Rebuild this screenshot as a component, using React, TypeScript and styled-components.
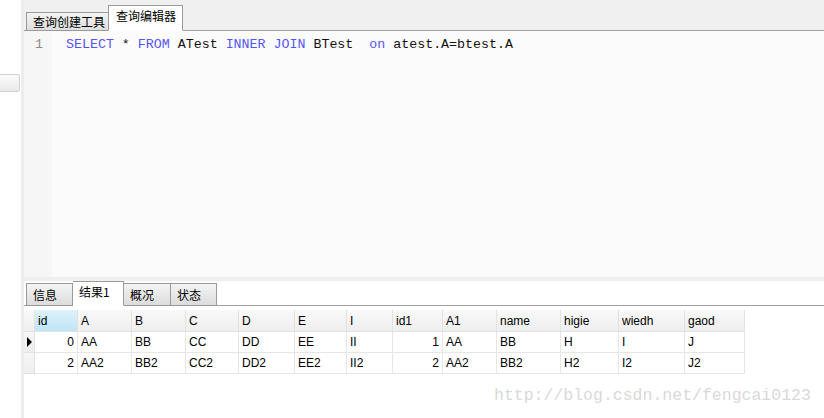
import React from 'react'
import styled, { createGlobalStyle, css } from 'styled-components'

const GlobalStyle = createGlobalStyle`
  html, body {
    margin: 0;
    padding: 0;
    background: #ffffff;
  }
  body {
    font-family: "Liberation Sans", "Noto Sans CJK SC", sans-serif;
    font-size: 12px;
    color: #000;
  }
`

const Window = styled.div`
  position: relative;
  display: flex;
  width: 824px;
  height: 418px;
  overflow: hidden;
  background: #fff;
`
const LeftRail = styled.div`
  width: 21px;
  flex: none;
  background: #fff;
  padding-top: 74px;
  box-sizing: border-box;
`
const RailButton = styled.div`
  width: 20px;
  height: 18px;
  box-sizing: border-box;
  border: 1px solid #cfcfcf;
  border-left: none;
  border-radius: 0 3px 3px 0;
  background: linear-gradient(#fbfbfb, #e9e9e9);
`
const RailDivider = styled.div`
  width: 3px;
  flex: none;
  background: #ededed;
`
const Main = styled.div`
  flex: 1;
  display: flex;
  flex-direction: column;
  min-width: 0;
`
const TopTabBar = styled.div`
  height: 30px;
  flex: none;
  background: #f0f0f0;
  border-bottom: 1px solid #a0a0a0;
  display: flex;
  align-items: flex-end;
  padding-left: 2px;
`
const tabBase = css`
  box-sizing: border-box;
  display: flex;
  align-items: center;
  font-family: "Noto Sans CJK SC", "Liberation Sans", sans-serif;
  font-size: 12px;
  line-height: 1;
  color: #000;
  border: 1px solid #9a9a9a;
  white-space: nowrap;
`
const Tab = styled.div<{ $active?: boolean; $w: number }>`
  ${tabBase};
  width: ${p => p.$w}px;
  margin-bottom: -1px;
  padding-left: 6px;
  ${p => p.$active
    ? css`
      height: 26px;
      background: #fff;
      border-bottom: 1px solid #fff;
      padding-left: 7px;
      padding-bottom: 5px;
    `
    : css`
      height: 19px;
      background: linear-gradient(#f3f3f3, #dedede);
      border-right: none;
      padding-top: 1px;
    `}
`
const Editor = styled.div`
  height: 246px;
  flex: none;
  display: flex;
  background: #fbfbfb;
`
const Gutter = styled.div`
  width: 28px;
  flex: none;
  background: #f6f6f6;
  box-sizing: border-box;
  padding: 6px 9px 0 0;
  text-align: right;
  font-family: "Liberation Mono", monospace;
  font-size: 13.3px;
  line-height: 16px;
  color: #8a8a8a;
`
const Code = styled.div`
  flex: 1;
  padding: 6px 0 0 14px;
  font-family: "Liberation Mono", monospace;
  font-size: 13.3px;
  line-height: 16px;
  color: #111;
  white-space: pre;
`
const Kw = styled.span`
  color: #5555f2;
`
const Splitter = styled.div`
  height: 4px;
  flex: none;
  background: #efefef;
`
const BottomTabBar = styled.div`
  height: 24px;
  flex: none;
  background: #fff;
  border-bottom: 1px solid #a0a0a0;
  display: flex;
  align-items: flex-end;
  padding-left: 2px;
`
const ResultTab = styled.div<{ $active?: boolean; $w: number }>`
  ${tabBase};
  width: ${p => p.$w}px;
  margin-bottom: -1px;
  padding-left: 6px;
  ${p => p.$active
    ? css`
      height: 25px;
      background: #fff;
      border-bottom: 1px solid #fff;
      padding-bottom: 3px;
    `
    : css`
      height: 23px;
      background: linear-gradient(#f4f4f4, #dcdcdc);
      padding-top: 1px;
    `}
  & + & {
    border-left: none;
  }
`
const GridArea = styled.div`
  flex: 1;
  padding-top: 4px;
  background: #fff;
`
const Grid = styled.div<{ $cols: string }>`
  display: grid;
  grid-template-columns: ${p => p.$cols};
  grid-auto-rows: 21px;
  grid-template-rows: 22px;
  width: max-content;
  font-family: "Liberation Sans", sans-serif;
  font-size: 12px;
`
const HeadCell = styled.div<{ $sel?: boolean }>`
  box-sizing: border-box;
  display: flex;
  align-items: center;
  padding: 0 3px;
  border-right: 1px solid #e2e2e2;
  border-bottom: 1px solid #e2e2e2;
  background: ${p => p.$sel
    ? 'linear-gradient(#def2fc, #bfe5f6)'
    : 'linear-gradient(#f9f9f9, #eeeeee)'};
`
const Cell = styled.div<{ $num?: boolean }>`
  box-sizing: border-box;
  display: flex;
  align-items: center;
  justify-content: ${p => (p.$num ? 'flex-end' : 'flex-start')};
  padding: 0 3px;
  border-right: 1px solid #e6e6e6;
  border-bottom: 1px solid #e6e6e6;
  background: #fff;
`
const RowHead = styled.div`
  box-sizing: border-box;
  display: flex;
  align-items: center;
  padding-left: 3px;
  border-right: 1px solid #e2e2e2;
  border-bottom: 1px solid #e2e2e2;
  background: linear-gradient(#f7f7f7, #ededed);
`
const Pointer = styled.span`
  width: 0;
  height: 0;
  border-top: 5px solid transparent;
  border-bottom: 5px solid transparent;
  border-left: 5px solid #000;
`
const Watermark = styled.div`
  position: absolute;
  left: 494px;
  top: 386px;
  font-family: "Liberation Mono", monospace;
  font-size: 16.5px;
  line-height: 20px;
  color: #d9d9d9;
  white-space: nowrap;
`

const columns = [
  { name: 'id', w: 43, num: true },
  { name: 'A', w: 54 },
  { name: 'B', w: 54 },
  { name: 'C', w: 53 },
  { name: 'D', w: 56 },
  { name: 'E', w: 52 },
  { name: 'I', w: 46 },
  { name: 'id1', w: 50, num: true },
  { name: 'A1', w: 54 },
  { name: 'name', w: 64 },
  { name: 'higie', w: 58 },
  { name: 'wiedh', w: 66 },
  { name: 'gaod', w: 60 },
]

const rows = [
  ['0', 'AA', 'BB', 'CC', 'DD', 'EE', 'II', '1', 'AA', 'BB', 'H', 'I', 'J'],
  ['2', 'AA2', 'BB2', 'CC2', 'DD2', 'EE2', 'II2', '2', 'AA2', 'BB2', 'H2', 'I2', 'J2'],
]

export default function App () {
  const cols = ['11px', ...columns.map(c => `${c.w}px`)].join(' ')
  return (
    <>
      <GlobalStyle />
      <Window>
        <LeftRail>
          <RailButton />
        </LeftRail>
        <RailDivider />
        <Main>
          <TopTabBar>
            <Tab $w={82}>查询创建工具</Tab>
            <Tab $w={75} $active>查询编辑器</Tab>
          </TopTabBar>
          <Editor>
            <Gutter>1</Gutter>
            <Code>
              <Kw>SELECT</Kw> * <Kw>FROM</Kw> ATest <Kw>INNER</Kw> <Kw>JOIN</Kw> BTest  <Kw>on</Kw> atest.A=btest.A
            </Code>
          </Editor>
          <Splitter />
          <BottomTabBar>
            <ResultTab $w={47}>信息</ResultTab>
            <ResultTab $w={51} $active>结果1</ResultTab>
            <ResultTab $w={47}>概况</ResultTab>
            <ResultTab $w={46}>状态</ResultTab>
          </BottomTabBar>
          <GridArea>
            <Grid $cols={cols}>
              <HeadCell />
              {columns.map((c, i) => (
                <HeadCell key={c.name} $sel={i === 0}>{c.name}</HeadCell>
              ))}
              {rows.map((r, ri) => (
                <React.Fragment key={ri}>
                  <RowHead>{ri === 0 && <Pointer />}</RowHead>
                  {r.map((v, ci) => (
                    <Cell key={ci} $num={columns[ci].num}>{v}</Cell>
                  ))}
                </React.Fragment>
              ))}
            </Grid>
          </GridArea>
        </Main>
        <Watermark>http://blog.csdn.net/fengcai0123</Watermark>
      </Window>
    </>
  )
}
